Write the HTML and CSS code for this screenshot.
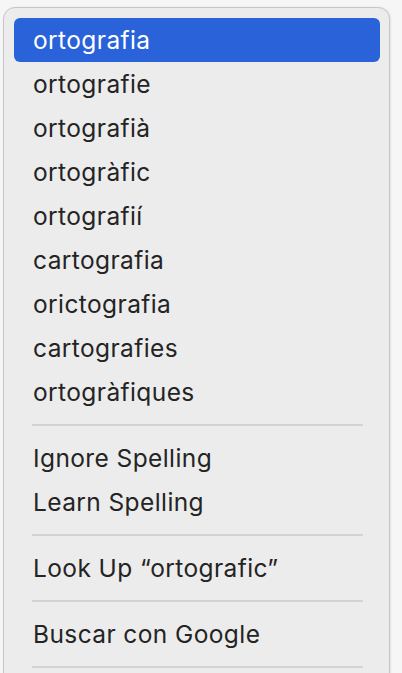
FILE: index.html
```html
<!DOCTYPE html>
<html>
<head>
<meta charset="utf-8">
<link rel="stylesheet" href="styles.css">
</head>
<body>
<div class="menu">
  <div class="item active">ortografia</div>
  <div class="item">ortografie</div>
  <div class="item">ortografià</div>
  <div class="item">ortogràfic</div>
  <div class="item">ortografií</div>
  <div class="item">cartografia</div>
  <div class="item">orictografia</div>
  <div class="item">cartografies</div>
  <div class="item">ortogràfiques</div>
  <div class="sep"></div>
  <div class="item">Ignore Spelling</div>
  <div class="item">Learn Spelling</div>
  <div class="sep"></div>
  <div class="item">Look Up “ortografic”</div>
  <div class="sep"></div>
  <div class="item">Buscar con Google</div>
  <div class="sep"></div>
</div>
</body>
</html>
```
FILE: styles.css
```css
html, body {
  margin: 0;
  padding: 0;
  background: #f6f6f6;
  height: 673px;
  overflow: hidden;
}
.menu {
  margin: 7px 0 0 3px;
  width: 387px;
  height: 720px;
  box-sizing: border-box;
  background: #ececec;
  border: 1px solid #c6c6c6;
  border-radius: 12px;
  padding: 10px 9px 0 10px;
  box-shadow: 1px 0 2px rgba(0,0,0,0.08);
  font-family: Inter, "Noto Sans", sans-serif;
  font-size: 24.5px;
  letter-spacing: 0.4px;
  color: #242424;
}
.item {
  height: 44px;
  line-height: 44px;
  padding-left: 19px;
  border-radius: 6px;
  white-space: nowrap;
}
.item.active {
  background: #2962d9;
  color: #ffffff;
}
.sep {
  height: 2px;
  background: #d3d3d3;
  margin: 10px 17px 10px 18px;
}
```
